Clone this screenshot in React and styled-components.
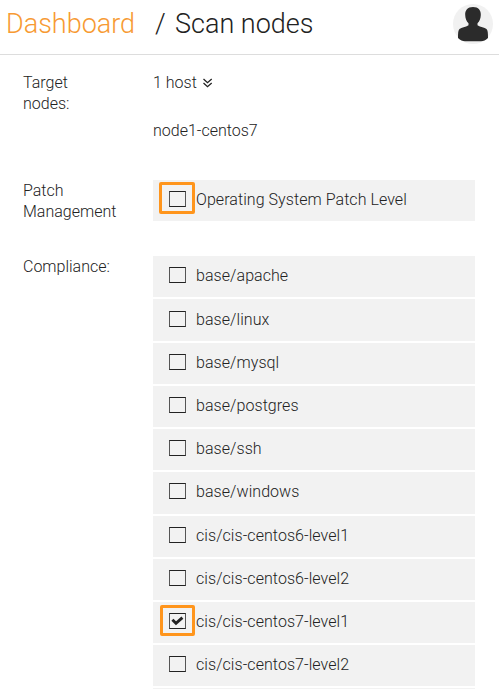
import React from 'react';
import styled, { createGlobalStyle } from 'styled-components';

const GlobalStyle = createGlobalStyle`
  * { box-sizing: border-box; }
  body {
    margin: 0;
    background: #fff;
    color: #222;
    font: 300 16px/21px Roboto, "Liberation Sans", sans-serif;
    overflow: hidden;
  }
`;

const Page = styled.div`
  width: 499px;
  height: 689px;
  overflow: hidden;
`;

const Header = styled.header`
  display: flex;
  align-items: flex-start;
  justify-content: space-between;
  height: 55px;
  padding: 4px 6px 0 6px;
  border-bottom: 1px solid #ddd;
`;

const Title = styled.h1`
  display: flex;
  margin: 0;
  font-size: 27px;
  font-weight: 300;
  line-height: 40px;
  white-space: pre;
`;

const Crumb = styled.a`
  width: 149px;
  color: #f79a33;
`;

const Separator = styled.span`
  width: 20px;
`;

const Avatar = styled.svg`
  display: block;
  width: 40px;
  height: 40px;
`;

const Form = styled.main`
  padding: 17px 24px 0 23px;
`;

const Field = styled.section`
  display: flex;
  height: ${(p) => p.$height}px;
`;

const Label = styled.div`
  width: 130px;
  padding-right: 36px;
`;

const Value = styled.div`
  width: 322px;
`;

const HostSummary = styled.div`
  display: flex;
  align-items: center;
  gap: 6px;
  height: 21px;
  margin-bottom: 27px;
`;

const Option = styled.label`
  display: flex;
  align-items: flex-start;
  height: ${(p) => p.$height || 41}px;
  margin-bottom: 2px;
  padding: ${(p) => p.$inset || 11}px 0 0 16px;
  background: #f2f2f2;
`;

const Box = styled.span`
  position: relative;
  width: 17px;
  height: 16px;
  margin-right: 10px;
  border: 1px solid #222;
  border-left-color: #555;
  border-right-color: #555;
`;

const Highlight = styled.span`
  position: absolute;
  left: ${(p) => p.$left}px;
  top: ${(p) => p.$top}px;
  width: ${(p) => p.$width}px;
  height: ${(p) => p.$height}px;
  border: 3px solid #ff951c;
  border-radius: 2px;
`;

const Check = styled.svg`
  display: block;
  width: 15px;
  height: 14px;
`;

const OptionText = styled.span`
  margin-top: -2px;
  letter-spacing: 0.06px;
`;

const profiles = [
  { name: 'base/apache' },
  { name: 'base/linux', height: 42, inset: 12 },
  { name: 'base/mysql' },
  { name: 'base/postgres' },
  { name: 'base/ssh' },
  { name: 'base/windows', height: 42 },
  { name: 'cis/cis-centos6-level1' },
  { name: 'cis/cis-centos6-level2' },
  { name: 'cis/cis-centos7-level1', checked: true },
  { name: 'cis/cis-centos7-level2' },
  { name: '' },
];

function ScanOption({ name, height, inset, checked, highlight }) {
  return (
    <Option $height={height} $inset={inset}>
      {name && (
        <Box>
          {checked && (
            <Check viewBox="0 0 15 14">
              <path d="M2.400 5.800 6 9.300 12.400 3.700" fill="none" stroke="#222" strokeWidth="2.900" />
            </Check>
          )}
          {highlight && (
            <Highlight
              $left={highlight.left}
              $top={highlight.top}
              $width={highlight.width}
              $height={highlight.height}
            />
          )}
        </Box>
      )}
      <OptionText>{name}</OptionText>
    </Option>
  );
}

export default function App() {
  return (
    <Page>
      <GlobalStyle />
      <Header>
        <Title>
          <Crumb>Dashboard</Crumb>
          <Separator>/</Separator>
          <span>Scan nodes</span>
        </Title>
        <Avatar viewBox="0 0 40 40">
          <circle cx="20" cy="20" r="20" fill="#f1f1f1" />
          <path
            d="M20 3C14.500 3 12 6.500 12.200 11C12.300 14.500 13.500 17.500 15.500 19.300V21.300C12.500 23.300 8.500 23.700 6.500 25C5.200 26 5 29 5 34C7.500 36.300 9.500 37.300 12 37.300H28C30.500 37.300 32.500 36.300 35 34C35 29 34.800 26 33.500 25C31.500 23.700 27.500 23.300 24.500 21.300V19.300C26.500 17.500 27.700 14.500 27.800 11C28 6.500 25.500 3 20 3Z"
            fill="#2b2b2b"
          />
        </Avatar>
      </Header>
      <Form>
        <Field $height={108}>
          <Label>Target nodes:</Label>
          <Value>
            <HostSummary>
              1 host
              <svg width="10" height="10" viewBox="0 0 10 10" fill="none" stroke="#222" strokeWidth="1.3">
                <path d="M.5 1 4.500 4.700 8.700 1M.5 5 4.500 8.700 8.700 5" />
              </svg>
            </HostSummary>
            <div>node1-centos7</div>
          </Value>
        </Field>
        <Field $height={76}>
          <Label>Patch Management</Label>
          <Value>
            <ScanOption
              name="Operating System Patch Level"
              highlight={{ left: -11, top: -10, width: 36, height: 32 }}
            />
          </Value>
        </Field>
        <Field $height={433}>
          <Label>Compliance:</Label>
          <Value>
            {profiles.map((p, i) => (
              <ScanOption
                key={i}
                {...p}
                highlight={p.checked && { left: -10, top: -9, width: 35, height: 31 }}
              />
            ))}
          </Value>
        </Field>
      </Form>
    </Page>
  );
}
